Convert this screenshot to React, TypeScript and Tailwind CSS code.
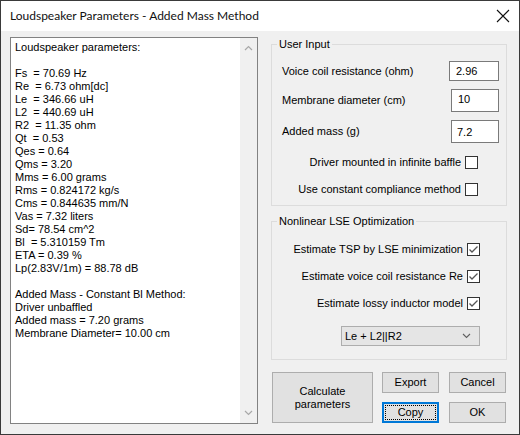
import { useState } from 'react'

const results = [
  'Loudspeaker parameters:',
  '',
  'Fs  = 70.69 Hz',
  'Re  = 6.73 ohm[dc]',
  'Le  = 346.66 uH',
  'L2  = 440.69 uH',
  'R2  = 11.35 ohm',
  'Qt  = 0.53',
  'Qes = 0.64',
  'Qms = 3.20',
  'Mms = 6.00 grams',
  'Rms = 0.824172 kg/s',
  'Cms = 0.844635 mm/N',
  'Vas = 7.32 liters',
  'Sd= 78.54 cm^2',
  'Bl  = 5.310159 Tm',
  'ETA = 0.39 %',
  'Lp(2.83V/1m) = 88.78 dB',
  '',
  'Added Mass - Constant Bl Method:',
  'Driver unbaffled',
  'Added mass = 7.20 grams',
  'Membrane Diameter= 10.00 cm',
]

function CheckBox({ checked, onChange }: { checked: boolean; onChange: () => void }) {
  return (
    <button
      onClick={onChange}
      className="w-[13px] h-[13px] border border-[#333] bg-white flex items-center justify-center shrink-0"
    >
      {checked && (
        <svg width="11" height="11" viewBox="0 0 11 11">
          <polyline points="1.5,5.5 4,8 9.5,2.5" fill="none" stroke="#555" strokeWidth="1.3" />
        </svg>
      )}
    </button>
  )
}

function CheckRow({ label, checked, onChange, className }: { label: string; checked: boolean; onChange: () => void; className: string }) {
  return (
    <div className={`flex items-center justify-end gap-[4px] h-[13px] ${className}`}>
      <span className="whitespace-nowrap">{label}</span>
      <CheckBox checked={checked} onChange={onChange} />
    </div>
  )
}

function Btn({ children, className }: { children: React.ReactNode; className: string }) {
  return (
    <button className={`bg-[#e1e1e1] border border-[#adadad] flex items-center justify-center leading-[13px] ${className}`}>
      {children}
    </button>
  )
}

export default function App() {
  const [checks, setChecks] = useState([false, false, true, true, true])
  const toggle = (i: number) => setChecks(c => c.map((v, j) => (j === i ? !v : v)))

  return (
    <div className="w-[520px] h-[435px] border border-[#3a3a3a] bg-[#f0f0f0] flex flex-col font-['Liberation_Sans',Arial,sans-serif] text-[11px] text-black">
      <div className="h-[30px] bg-white flex items-center justify-between pl-[9px] pr-[9px] shrink-0">
        <span className="font-['Lato',sans-serif] text-[12px] text-[#111]">Loudspeaker Parameters - Added Mass Method</span>
        <svg width="14" height="14" viewBox="0 0 14 14">
          <path d="M1 1L13 13M13 1L1 13" stroke="#111" strokeWidth="1.1" />
        </svg>
      </div>

      <div className="flex-1 flex pl-[9px] pt-[6px]">
        {/* results text box */}
        <div className="w-[248px] h-[387px] border border-[#828282] bg-white flex">
          <div className="flex-1 pl-[4px] pt-[3px] leading-[13px] whitespace-pre">
            {results.map((l, i) => (
              <div key={i} className="h-[13px]">{l}</div>
            ))}
          </div>
          <div className="w-[17px] bg-[#f0f0f0] flex flex-col justify-between items-center py-[7px]">
            <svg width="9" height="6" viewBox="0 0 9 6">
              <polyline points="1,5 4.5,1.5 8,5" fill="none" stroke="#a8a8a8" strokeWidth="1.2" />
            </svg>
            <svg width="9" height="6" viewBox="0 0 9 6">
              <polyline points="1,1 4.5,4.5 8,1" fill="none" stroke="#a8a8a8" strokeWidth="1.2" />
            </svg>
          </div>
        </div>

        {/* right column */}
        <div className="ml-[13px] w-[236px] flex flex-col pt-[1px]">
          <fieldset className="border border-[#dcdcdc] pl-[5px] pb-[9px]">
            <legend className="px-[2px] leading-[13px]">User Input</legend>
            <div className="flex items-center justify-between mt-[10px] pl-[5px] pr-[7px] h-[20px]">
              <span>Voice coil resistance (ohm)</span>
              <input defaultValue="2.96" className="w-[50px] h-[20px] border border-[#7a7a7a] bg-white px-[6px] outline-none" />
            </div>
            <div className="flex items-center justify-between mt-[8px] pl-[5px] pr-[7px] h-[23px]">
              <span>Membrane diameter (cm)</span>
              <input defaultValue="10" className="w-[48px] h-[23px] border border-[#7a7a7a] bg-white px-[6px] pb-[4px] outline-none" />
            </div>
            <div className="flex items-center justify-between mt-[8px] pl-[5px] pr-[7px] h-[23px]">
              <span>Added mass (g)</span>
              <input defaultValue="7.2" className="w-[48px] h-[23px] border border-[#7a7a7a] bg-white px-[5px] outline-none" />
            </div>
            <CheckRow className="mt-[13px] pr-[28px]" label="Driver mounted in infinite baffle" checked={checks[0]} onChange={() => toggle(0)} />
            <CheckRow className="mt-[14px] pr-[28px]" label="Use constant compliance method" checked={checks[1]} onChange={() => toggle(1)} />
          </fieldset>

          <fieldset className="mt-[9px] border border-[#dcdcdc] pl-[5px] pb-[13px]">
            <legend className="px-[2px] leading-[13px]">Nonlinear LSE Optimization</legend>
            <CheckRow className="mt-[15px] pr-[26px]" label="Estimate TSP by LSE minimization" checked={checks[2]} onChange={() => toggle(2)} />
            <CheckRow className="mt-[14px] pr-[26px]" label="Estimate voice coil resistance Re" checked={checks[3]} onChange={() => toggle(3)} />
            <CheckRow className="mt-[14px] pr-[26px]" label="Estimate lossy inductor model" checked={checks[4]} onChange={() => toggle(4)} />
            <div className="flex justify-end pr-[26px] mt-[16px]">
              <div className="w-[139px] h-[20px] bg-[#e5e5e5] border border-[#adadad] flex items-center justify-between pl-[3px] pr-[8px]">
                <span>Le + L2||R2</span>
                <svg width="9" height="6" viewBox="0 0 9 6">
                  <polyline points="1,1 4.5,4.5 8,1" fill="none" stroke="#606060" strokeWidth="1.1" />
                </svg>
              </div>
            </div>
          </fieldset>

          <div className="flex mt-[12px] pl-[1px]">
            <Btn className="w-[101px] h-[51px] flex-col">
              <span>Calculate</span>
              <span>parameters</span>
            </Btn>
            <div className="ml-[9px] flex flex-col gap-[9px]">
              <Btn className="w-[57px] h-[21px]">Export</Btn>
              <button className="w-[57px] h-[21px] bg-[#e1e1e1] border-2 border-[#0078d7] flex items-center justify-center">
                <span className="w-[51px] h-[15px] border border-dotted border-black flex items-center justify-center leading-[13px]">Copy</span>
              </button>
            </div>
            <div className="ml-[10px] flex flex-col gap-[9px]">
              <Btn className="w-[57px] h-[21px]">Cancel</Btn>
              <Btn className="w-[57px] h-[21px]">OK</Btn>
            </div>
          </div>
        </div>
      </div>
    </div>
  )
}
